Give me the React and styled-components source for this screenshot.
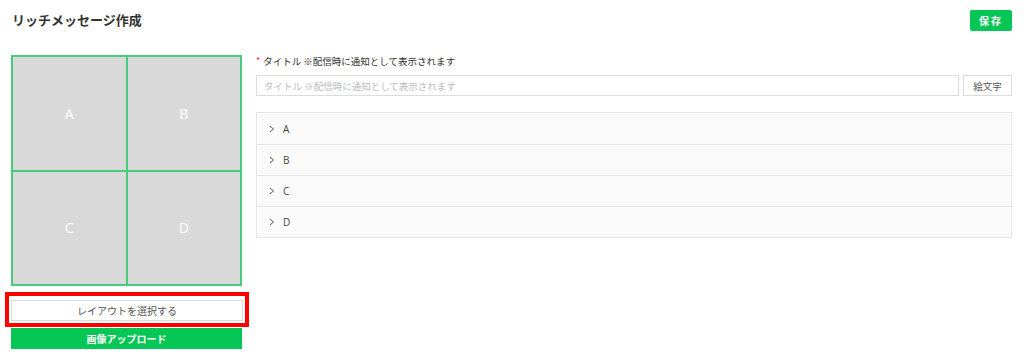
import React from "react";
import styled, { createGlobalStyle } from "styled-components";

const Global = createGlobalStyle`
  html, body { margin: 0; padding: 0; background: #fff; }
  body { font-family: "Open Sans", "Noto Sans CJK JP", sans-serif; color: #333; }
  * { box-sizing: border-box; }
`;

const Page = styled.div`
  width: 1024px;
  height: 357px;
  padding: 10px 12px 0 11px;
  display: flex;
  flex-direction: column;
`;

const Header = styled.div`
  display: flex;
  justify-content: space-between;
  align-items: flex-start;
  height: 45px;
`;

const Title = styled.h1`
  margin: 3px 0 0 1px;
  font-size: 13px;
  font-weight: 700;
  line-height: 14px;
  color: #333;
  font-family: "Noto Sans CJK JP", sans-serif;
`;

const GreenButton = styled.button`
  border: none;
  background: #06c755;
  color: #fff;
  font-family: "Noto Sans CJK JP", sans-serif;
  font-weight: 700;
  cursor: pointer;
  padding: 0;
  display: flex;
  align-items: center;
  justify-content: center;
  width: ${(p) => p.$w || "auto"};
  height: ${(p) => p.$h || "21px"};
  font-size: ${(p) => p.$fs || "10px"};
  letter-spacing: ${(p) => p.$ls || "0"};
  border-radius: ${(p) => p.$r || "0"};
  margin-top: ${(p) => p.$mt || "0"};
`;

const Body = styled.div`
  display: flex;
  gap: 13px;
  align-items: flex-start;
`;

const LeftCol = styled.div`
  width: 232px;
  display: flex;
  flex-direction: column;
`;

const Grid = styled.div`
  width: 231px;
  height: 231px;
  border: 2px solid #46cd7c;
  background: #46cd7c;
  display: grid;
  grid-template-columns: 1fr 1fr;
  grid-template-rows: 1fr 1fr;
  gap: 2px;
`;

const Cell = styled.div`
  background: #d9d9d9;
  color: #fff;
  font-size: 14px;
  display: flex;
  align-items: center;
  justify-content: center;
`;

const Highlight = styled.div`
  margin: 6px -6px 0 -6px;
  border: 4px solid #ff0000;
  padding: 4px 2px 2px 2px;
`;

const WhiteButton = styled.button`
  background: #fff;
  border: 1px solid #dcdcdc;
  color: #555;
  font-family: "Noto Sans CJK JP", sans-serif;
  font-size: ${(p) => p.$fs || "10px"};
  height: 21px;
  width: ${(p) => p.$w || "100%"};
  padding: 0;
  display: flex;
  align-items: center;
  justify-content: center;
  flex-shrink: 0;
  cursor: pointer;
`;

const RightCol = styled.div`
  flex: 1;
  display: flex;
  flex-direction: column;
  padding-top: 0;
`;

const Label = styled.div`
  font-family: "Noto Sans CJK JP", sans-serif;
  font-size: 9.5px;
  line-height: 12px;
  color: #333;
  display: flex;
  align-items: center;
  gap: 3px;
`;

const Req = styled.span`
  color: #f5222d;
  font-size: 9px;
`;

const InputRow = styled.div`
  display: flex;
  gap: 4px;
  margin-top: 8px;
`;

const Input = styled.input`
  flex: 1;
  height: 21px;
  border: 1px solid #dcdcdc;
  padding: 0 7px;
  font-family: "Noto Sans CJK JP", sans-serif;
  font-size: 9.5px;
  color: #333;
  outline: none;
  &::placeholder { color: #bdbdbd; }
`;

const Accordion = styled.div`
  margin-top: 16px;
  border: 1px solid #e6e6e6;
  background: #fafafa;
  display: flex;
  flex-direction: column;
`;

const Row = styled.div`
  height: 31px;
  display: flex;
  align-items: center;
  padding-left: 12px;
  gap: 8px;
  font-size: 10px;
  color: #444;
  border-top: ${(p) => (p.$first ? "none" : "1px solid #e6e6e6")};
`;

const Chevron = () => (
  <svg width="6" height="8" viewBox="0 0 6 8" fill="none">
    <path d="M1 1 L4.5 4 L1 7" stroke="#555" strokeWidth="1" />
  </svg>
);

export default function App() {
  const rows = ["A", "B", "C", "D"];
  return (
    <>
      <Global />
      <Page>
        <Header>
          <Title>リッチメッセージ作成</Title>
          <GreenButton $w="42px" $h="21px" $fs="10px" $ls="2px" $r="2px">
            保存
          </GreenButton>
        </Header>
        <Body>
          <LeftCol>
            <Grid>
              {rows.map((r) => (
                <Cell key={r}>{r}</Cell>
              ))}
            </Grid>
            <Highlight>
              <WhiteButton>レイアウトを選択する</WhiteButton>
            </Highlight>
            <GreenButton $w="231px" $h="21px" $fs="10px" $mt="1px">
              画像アップロード
            </GreenButton>
          </LeftCol>
          <RightCol>
            <Label>
              <Req>*</Req>
              <span>タイトル ※配信時に通知として表示されます</span>
            </Label>
            <InputRow>
              <Input placeholder="タイトル ※配信時に通知として表示されます" />
              <WhiteButton $w="49px" $fs="9.5px">絵文字</WhiteButton>
            </InputRow>
            <Accordion>
              {rows.map((r, i) => (
                <Row key={r} $first={i === 0}>
                  <Chevron />
                  <span>{r}</span>
                </Row>
              ))}
            </Accordion>
          </RightCol>
        </Body>
      </Page>
    </>
  );
}
